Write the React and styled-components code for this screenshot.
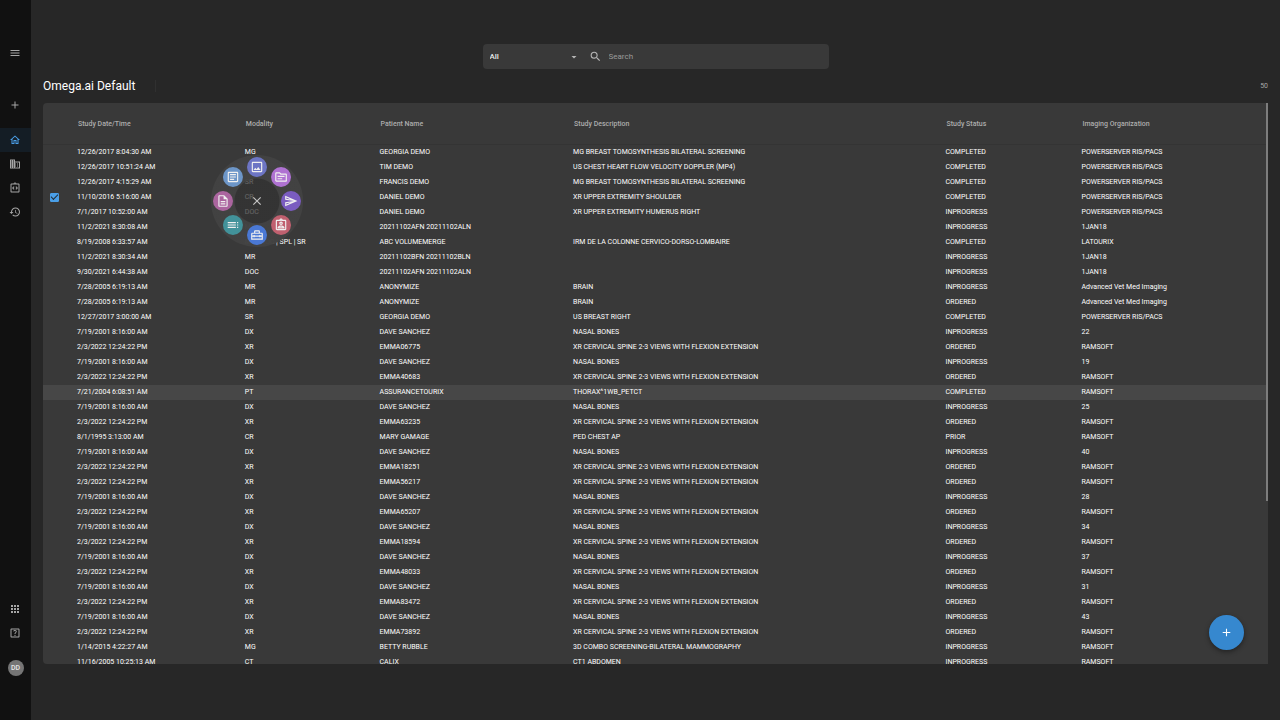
import { useState } from 'react';
import styled, { createGlobalStyle, css } from 'styled-components';
import {
    MdAdd,
    MdApps,
    MdArrowDropDown,
    MdClose,
    MdHistory,
    MdMenu,
    MdOutlineArticle,
    MdOutlineAssignmentInd,
    MdOutlineDescription,
    MdOutlineDomain,
    MdOutlineHelpCenter,
    MdOutlineHome,
    MdOutlineHomeRepairService,
    MdOutlineImage,
    MdOutlineIntegrationInstructions,
    MdOutlineSend,
    MdOutlineTopic,
    MdSearch,
    MdToc,
} from 'react-icons/md';

const GlobalStyles = createGlobalStyle`
    * {
        box-sizing: border-box;
    }

    body {
        margin: 0;
        background-color: #272727;
        color: #ffffff;
        font-family: Roboto, 'Liberation Sans', sans-serif;
    }

    button, input, select {
        font-family: inherit;
    }
`;

const XR_FLEX = 'XR CERVICAL SPINE 2-3 VIEWS WITH FLEXION EXTENSION';
const MG_TOMO = 'MG BREAST TOMOSYNTHESIS BILATERAL SCREENING';
const POWER = 'POWERSERVER RIS/PACS';
const VET = 'Advanced Vet Med Imaging';

const nasal = org => [
    '7/19/2001 8:16:00 AM',
    'DX',
    'DAVE SANCHEZ',
    'NASAL BONES',
    'INPROGRESS',
    org,
];
const emma = id => [
    '2/3/2022 12:24:22 PM',
    'XR',
    `EMMA${id}`,
    XR_FLEX,
    'ORDERED',
    'RAMSOFT',
];

const studies = [
    ['12/26/2017 8:04:30 AM', 'MG', 'GEORGIA DEMO', MG_TOMO, 'COMPLETED', POWER],
    ['12/26/2017 10:51:24 AM', 'US', 'TIM DEMO', 'US CHEST HEART FLOW VELOCITY DOPPLER (MP4)', 'COMPLETED', POWER],
    ['12/26/2017 4:15:29 AM', 'SR', 'FRANCIS DEMO', MG_TOMO, 'COMPLETED', POWER],
    ['11/10/2016 5:16:00 AM', 'CR', 'DANIEL DEMO', 'XR UPPER EXTREMITY SHOULDER', 'COMPLETED', POWER],
    ['7/1/2017 10:52:00 AM', 'DOC', 'DANIEL DEMO', 'XR UPPER EXTREMITY HUMERUS RIGHT', 'INPROGRESS', POWER],
    ['11/2/2021 8:30:08 AM', 'MR', '20211102AFN 20211102ALN', '', 'INPROGRESS', '1JAN18'],
    ['8/19/2008 6:33:57 AM', 'MR | DOC | SPL | SR', 'ABC VOLUMEMERGE', 'IRM DE LA COLONNE CERVICO-DORSO-LOMBAIRE', 'COMPLETED', 'LATOURIX'],
    ['11/2/2021 8:30:34 AM', 'MR', '20211102BFN 20211102BLN', '', 'INPROGRESS', '1JAN18'],
    ['9/30/2021 6:44:38 AM', 'DOC', '20211102AFN 20211102ALN', '', 'INPROGRESS', '1JAN18'],
    ['7/28/2005 6:19:13 AM', 'MR', 'ANONYMIZE', 'BRAIN', 'INPROGRESS', VET],
    ['7/28/2005 6:19:13 AM', 'MR', 'ANONYMIZE', 'BRAIN', 'ORDERED', VET],
    ['12/27/2017 3:00:00 AM', 'SR', 'GEORGIA DEMO', 'US BREAST RIGHT', 'COMPLETED', POWER],
    nasal('22'),
    emma('06775'),
    nasal('19'),
    emma('40683'),
    ['7/21/2004 6:08:51 AM', 'PT', 'ASSURANCETOURIX', 'THORAX^1WB_PETCT', 'COMPLETED', 'RAMSOFT'],
    nasal('25'),
    emma('63235'),
    ['8/1/1995 3:13:00 AM', 'CR', 'MARY GAMAGE', 'PED CHEST AP', 'PRIOR', 'RAMSOFT'],
    nasal('40'),
    emma('18251'),
    emma('56217'),
    nasal('28'),
    emma('65207'),
    nasal('34'),
    emma('18594'),
    nasal('37'),
    emma('48033'),
    nasal('31'),
    emma('83472'),
    nasal('43'),
    emma('73892'),
    ['1/14/2015 4:22:27 AM', 'MG', 'BETTY RUBBLE', '3D COMBO SCREENING-BILATERAL MAMMOGRAPHY', 'INPROGRESS', 'RAMSOFT'],
    ['11/16/2005 10:25:13 AM', 'CT', 'CALIX', 'CT1 ABDOMEN', 'INPROGRESS', 'RAMSOFT'],
];

const columns = [
    'Study Date/Time',
    'Modality',
    'Patient Name',
    'Study Description',
    'Study Status',
    'Imaging Organization',
];

const actions = [
    { label: 'Image viewer', icon: MdOutlineImage, color: '#6d75c4' },
    { label: 'Documents', icon: MdOutlineTopic, color: '#af72d2' },
    { label: 'Send', icon: MdOutlineSend, color: '#7a5cc0' },
    { label: 'Patient info', icon: MdOutlineAssignmentInd, color: '#c0606f' },
    { label: 'Tools', icon: MdOutlineHomeRepairService, color: '#4a78d4' },
    { label: 'Log', icon: MdToc, color: '#42929a' },
    { label: 'Report', icon: MdOutlineDescription, color: '#ab659f' },
    { label: 'Order', icon: MdOutlineArticle, color: '#6d96c8' },
];

const ACTIVE_ROW = 3;
const HOVERED_ROW = 16;

const RadialMenu = ({ onClose }) => (
    <Ring>
        <CloseButton aria-label="Close" onClick={onClose}>
            <MdClose size={14} />
        </CloseButton>
        {actions.map(({ label, icon: Icon, color }, i) => (
            <ActionButton key={label} aria-label={label} $color={color} $angle={i * 45}>
                <Icon size={14} />
            </ActionButton>
        ))}
    </Ring>
);

const App = () => {
    const [menuOpen, setMenuOpen] = useState(true);

    return (
        <>
            <GlobalStyles />
            <Layout>
                <Sidebar>
                    <MenuButton aria-label="Menu">
                        <MdMenu />
                    </MenuButton>
                    <NavButton aria-label="New">
                        <MdAdd />
                    </NavButton>
                    <NavGroup>
                        <NavLink href="#home" aria-label="Home" $active>
                            <MdOutlineHome />
                        </NavLink>
                        <NavLink href="#organizations" aria-label="Organizations">
                            <MdOutlineDomain />
                        </NavLink>
                        <NavLink href="#workflows" aria-label="Workflows">
                            <MdOutlineIntegrationInstructions />
                        </NavLink>
                        <NavLink href="#history" aria-label="History">
                            <MdHistory />
                        </NavLink>
                    </NavGroup>
                    <NavFooter>
                        <NavLink href="#apps" aria-label="Apps">
                            <MdApps />
                        </NavLink>
                        <NavLink href="#help" aria-label="Help">
                            <MdOutlineHelpCenter />
                        </NavLink>
                        <Avatar aria-label="Account">DD</Avatar>
                    </NavFooter>
                </Sidebar>
                <Main>
                    <SearchBar role="search">
                        <Scope>
                            <ScopeSelect aria-label="Search in">
                                <option>All</option>
                            </ScopeSelect>
                            <MdArrowDropDown size={12} />
                        </Scope>
                        <SearchLabel>
                            <MdSearch size={13} />
                            <SearchInput placeholder="Search" aria-label="Search" />
                        </SearchLabel>
                    </SearchBar>
                    <TitleRow>
                        <Title>Omega.ai Default</Title>
                        <Total>50</Total>
                    </TitleRow>
                    <Panel>
                        <Table>
                            <colgroup>
                                <SelectCol />
                                <DateCol />
                                <ModalityCol />
                                <PatientCol />
                                <DescriptionCol />
                                <StatusCol />
                                <col />
                            </colgroup>
                            <thead>
                                <tr>
                                    <HeadCell aria-label="Selected" />
                                    {columns.map(name => (
                                        <HeadCell key={name}>{name}</HeadCell>
                                    ))}
                                </tr>
                            </thead>
                            <tbody>
                                {studies.map((study, row) => (
                                    <Row key={row} $hovered={row === HOVERED_ROW}>
                                        <Cell>
                                            {row === ACTIVE_ROW && (
                                                <Checkbox
                                                    type="checkbox"
                                                    aria-label="Select study"
                                                    defaultChecked
                                                />
                                            )}
                                        </Cell>
                                        {study.map((value, i) => (
                                            <Cell key={columns[i]}>
                                                {value}
                                                {row === ACTIVE_ROW && i === 1 && menuOpen && (
                                                    <RadialMenu onClose={() => setMenuOpen(false)} />
                                                )}
                                            </Cell>
                                        ))}
                                    </Row>
                                ))}
                            </tbody>
                        </Table>
                        <ScrollThumb />
                    </Panel>
                </Main>
                <Fab aria-label="Add study">
                    <MdAdd size={13} />
                </Fab>
            </Layout>
        </>
    );
};

export default App;

const Layout = styled.div`
    display: flex;
    height: 100vh;
`;

const Sidebar = styled.nav`
    display: flex;
    flex-direction: column;
    flex-shrink: 0;
    width: 31px;
    padding: 41px 0 44px;
    background-color: #111111;
`;

const navItem = css`
    display: flex;
    align-items: center;
    justify-content: center;
    width: 100%;
    height: 24px;
    padding: 0 1px 0 0;
    border: none;
    background-color: transparent;
    color: #a6a6a6;
    font-size: 12px;
`;

const NavButton = styled.button`
    ${navItem}
`;

const MenuButton = styled(NavButton)`
    margin-bottom: 28px;
`;

const NavLink = styled.a`
    ${navItem}
    ${({ $active }) =>
        $active &&
        css`
            background-color: #141d25;
            color: #4a9fe8;
        `}
`;

const NavGroup = styled.div`
    margin-top: 11px;
`;

const NavFooter = styled.div`
    display: flex;
    flex-direction: column;
    align-items: center;
    margin-top: auto;
`;

const Avatar = styled.button`
    width: 16px;
    height: 16px;
    margin-top: 15px;
    padding: 0;
    border: none;
    border-radius: 50%;
    background-color: #757575;
    color: #e6e6e6;
    font-size: 7px;
    font-weight: 500;
    line-height: 16px;
`;

const Main = styled.main`
    display: flex;
    flex: 1;
    flex-direction: column;
    min-width: 0;
    padding: 44px 12px 56px;
`;

const SearchBar = styled.form`
    display: flex;
    align-self: center;
    width: 346px;
    height: 25px;
    border-radius: 4px;
    background-color: #393939;
    color: #b5b5b5;
`;

const Scope = styled.div`
    display: flex;
    align-items: center;
    width: 97px;
    padding-left: 7px;
`;

const ScopeSelect = styled.select`
    flex: 1;
    padding: 0;
    border: none;
    outline: none;
    appearance: none;
    background-color: transparent;
    color: #e6e6e6;
    font-size: 8px;
    font-weight: 500;
`;

const SearchLabel = styled.label`
    display: flex;
    flex: 1;
    align-items: center;
    gap: 7px;
    padding-left: 9px;
`;

const SearchInput = styled.input`
    flex: 1;
    padding: 0;
    border: none;
    outline: none;
    background-color: transparent;
    color: #e6e6e6;
    font-size: 8px;

    &::placeholder {
        color: #9a9a9a;
    }
`;

const TitleRow = styled.header`
    display: flex;
    align-items: center;
    justify-content: space-between;
    height: 34px;
`;

const Title = styled.h1`
    margin: 0;
    padding-right: 20px;
    border-right: 1px solid #303030;
    font-size: 12px;
    font-weight: 400;
    line-height: 12px;
`;

const Total = styled.span`
    color: #a6a6a6;
    font-size: 7px;
`;

const Panel = styled.section`
    position: relative;
    flex: 1;
    min-height: 0;
    overflow: hidden;
    border-radius: 4px 0 0 4px;
    background-color: #393939;
`;

const Table = styled.table`
    width: 100%;
    table-layout: fixed;
    border-spacing: 0;
    font-size: 7px;
    line-height: 14px;
    white-space: nowrap;
`;

const SelectCol = styled.col`
    width: 34px;
`;

const DateCol = styled.col`
    width: 13.7%;
`;

const ModalityCol = styled.col`
    width: 11%;
`;

const PatientCol = styled.col`
    width: 15.8%;
`;

const DescriptionCol = styled.col`
    width: 30.4%;
`;

const StatusCol = styled.col`
    width: 11.1%;
`;

const HeadCell = styled.th`
    height: 42px;
    padding: 0 0 0 1px;
    border-bottom: 1px solid #343434;
    color: #adadad;
    font-weight: 500;
    text-align: left;
`;

const Row = styled.tr`
    height: 15px;
    background-color: ${({ $hovered }) => ($hovered ? '#474747' : 'transparent')};
`;

const Cell = styled.td`
    position: relative;
    height: 15px;
    padding: 0 0 1px;
`;

const Checkbox = styled.input`
    display: grid;
    place-content: center;
    width: 9px;
    height: 9px;
    margin: 0 0 0 7px;
    border: 1px solid #4a9fe8;
    border-radius: 1px;
    appearance: none;

    &:checked {
        background-color: #4a9fe8;
    }

    &:checked::after {
        content: '';
        width: 6px;
        height: 3px;
        border-bottom: 1px solid #222c36;
        border-left: 1px solid #222c36;
        transform: translateY(-1px) rotate(-45deg);
    }
`;

const Ring = styled.div`
    position: absolute;
    top: -35px;
    left: -34px;
    z-index: 1;
    width: 92px;
    height: 92px;
    border-radius: 50%;
    background: radial-gradient(
        circle,
        rgba(50, 50, 50, 0.75) 22px,
        rgba(66, 66, 66, 0.98) 23px
    );
`;

const RingButton = styled.button`
    position: absolute;
    top: 36px;
    left: 36px;
    display: flex;
    align-items: center;
    justify-content: center;
    width: 20px;
    height: 20px;
    padding: 0;
    border: none;
    border-radius: 50%;
    color: #f0f0f0;
`;

const CloseButton = styled(RingButton)`
    background-color: transparent;
    color: #c4c4c4;
`;

const ActionButton = styled(RingButton)`
    background-color: ${({ $color }) => $color};
    transform: ${({ $angle }) =>
        `rotate(${$angle}deg) translateY(-34px) rotate(-${$angle}deg)`};
`;

const ScrollThumb = styled.div`
    position: absolute;
    top: 0;
    right: 0;
    width: 2px;
    height: 71%;
    background-color: #7d7d7d;
`;

const Fab = styled.button`
    position: fixed;
    right: 36px;
    bottom: 70px;
    display: flex;
    align-items: center;
    justify-content: center;
    width: 35px;
    height: 35px;
    padding: 0;
    border: none;
    border-radius: 50%;
    background-color: #3688cf;
    box-shadow: 0 2px 5px rgba(0, 0, 0, 0.4);
    color: #ffffff;
`;
